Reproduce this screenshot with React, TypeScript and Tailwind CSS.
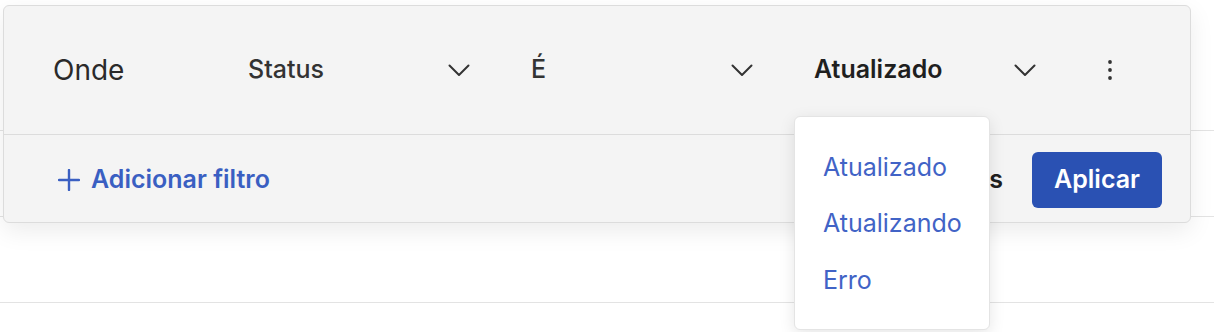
import React from "react"

function Chevron() {
  return (
    <svg width="22" height="13" viewBox="0 0 22 13" fill="none" className="shrink-0">
      <polyline points="1.5,1.5 11,11 20.5,1.5" stroke="#333333" strokeWidth="2" strokeLinecap="round" strokeLinejoin="round" />
    </svg>
  )
}

function Kebab() {
  return (
    <svg width="6" height="22" viewBox="0 0 6 22" className="shrink-0">
      <circle cx="3" cy="3" r="1.9" fill="#333333" />
      <circle cx="3" cy="11" r="1.9" fill="#333333" />
      <circle cx="3" cy="19" r="1.9" fill="#333333" />
    </svg>
  )
}

function Plus() {
  return (
    <svg width="22" height="22" viewBox="0 0 22 22" fill="none" className="shrink-0">
      <path d="M11 1v20M1 11h20" stroke="#3a5fc2" strokeWidth="2.4" strokeLinecap="round" />
    </svg>
  )
}

function SelectBox({ label, bold }: { label: string; bold?: boolean }) {
  return (
    <div className="flex w-[222px] items-center justify-between mr-[61px]">
      <span className={bold ? "text-[25px] font-semibold text-[#1f1f1f]" : "text-[25px] font-medium text-[#333333]"}>
        {label}
      </span>
      <Chevron />
    </div>
  )
}

const options = ["Atualizado", "Atualizando", "Erro"]

export default function App() {
  return (
    <div className="relative h-[332px] w-full overflow-hidden bg-white font-['Inter',sans-serif]">
      {/* table behind the filter panel */}
      <div className="flex flex-col">
        <div className="h-[131px] border-b border-[#e3e3e3]"></div>
        <div className="h-[86px] border-b border-[#e3e3e3]"></div>
        <div className="h-[86px] border-b border-[#e3e3e3]"></div>
      </div>

      {/* filter panel */}
      <div className="absolute left-[3px] top-[5px] w-[1188px] rounded-[6px] border border-[#dcdcdc] bg-[#f4f4f4] shadow-[0_8px_24px_rgba(0,0,0,0.08)]">
        <div className="flex h-[129px] items-center border-b border-[#dcdcdc] pl-[49px]">
          <span className="w-[195px] text-[28px] text-[#2a2a2a]">Onde</span>
          <SelectBox label="Status" />
          <SelectBox label="É" />
          <SelectBox label="Atualizado" bold />
          <div className="ml-[10px] flex items-center">
            <Kebab />
          </div>
        </div>
        <div className="flex h-[87px] items-center justify-between pl-[54px] pr-[28px] pt-[3px]">
          <button className="flex items-center gap-[11px] text-[25px] font-semibold text-[#3a5fc2]">
            <Plus />
            Adicionar filtro
          </button>
          <div className="flex items-center gap-[29px]">
            <span className="text-[25px] font-semibold text-[#1f1f1f]">Limpar filtros</span>
            <button className="flex h-[56px] w-[130px] items-center justify-center rounded-[6px] bg-[#2a51b3] text-[25px] font-semibold text-white">
              Aplicar
            </button>
          </div>
        </div>
      </div>

      {/* options menu */}
      <div className="absolute left-[794px] top-[116px] flex h-[214px] w-[196px] flex-col rounded-[6px] border border-[#e4e4e4] bg-white pt-[22px] shadow-[0_4px_16px_rgba(0,0,0,0.10)]">
        {options.map((o) => (
          <div key={o} className="flex h-[56.5px] items-center pl-[28px] text-[25px] text-[#4163c6]">
            {o}
          </div>
        ))}
      </div>
    </div>
  )
}
